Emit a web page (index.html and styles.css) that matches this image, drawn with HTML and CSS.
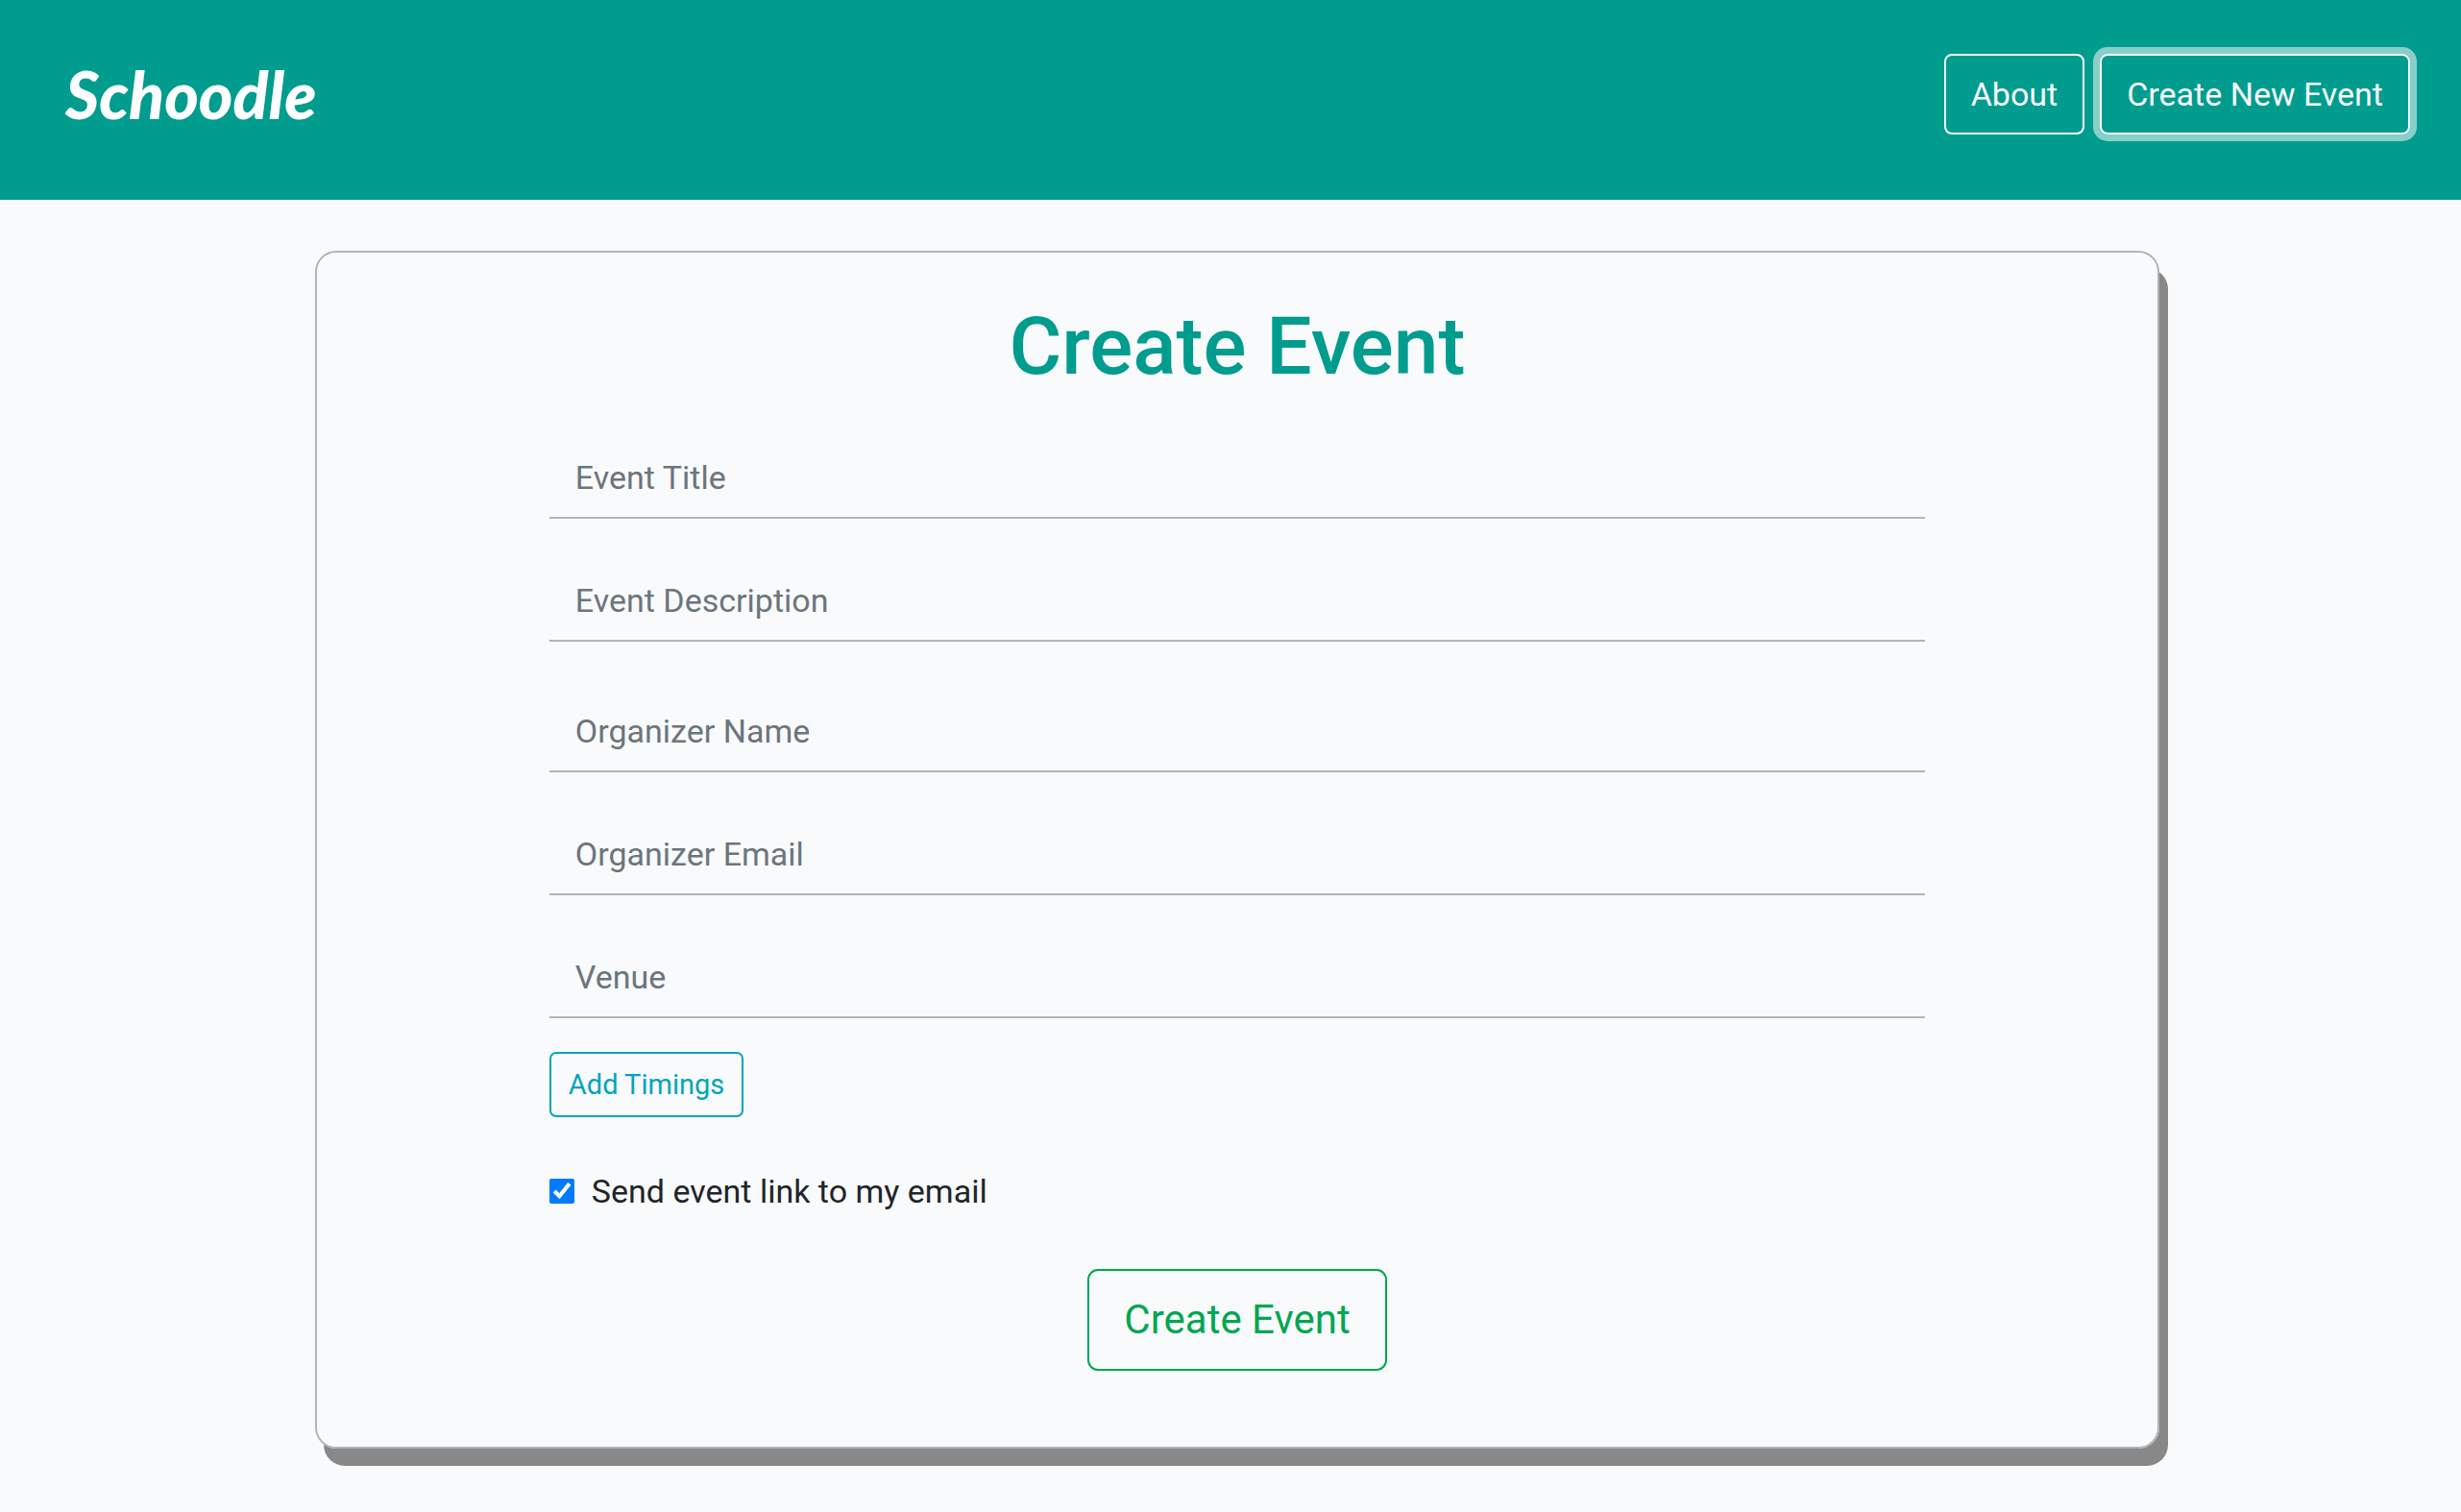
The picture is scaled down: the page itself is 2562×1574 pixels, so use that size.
FILE: index.html
```html
<!DOCTYPE html>
<html lang="en">
<head>
  <meta charset="utf-8">
  <meta name="viewport" content="width=device-width, initial-scale=1">
  <title>Schoodle</title>
  <link rel="stylesheet" href="styles.css">
</head>
<body>
  <header class="site-header">
    <a class="brand" href="#">Schoodle</a>
    <nav class="nav">
      <button class="btn btn-light" type="button">About</button>
      <button class="btn btn-light is-focused" type="button">Create New Event</button>
    </nav>
  </header>
  <main class="page">
    <section class="card">
      <h1 class="card-title">Create Event</h1>
      <form class="event-form">
        <div class="fields">
          <input class="field" type="text" placeholder="Event Title" aria-label="Event Title">
          <input class="field" type="text" placeholder="Event Description" aria-label="Event Description">
        </div>
        <div class="fields">
          <input class="field" type="text" placeholder="Organizer Name" aria-label="Organizer Name">
          <input class="field" type="email" placeholder="Organizer Email" aria-label="Organizer Email">
          <input class="field" type="text" placeholder="Venue" aria-label="Venue">
        </div>
        <button class="btn btn-info" type="button">Add Timings</button>
        <div class="check">
          <input class="check-box" type="checkbox" id="send-link" checked>
          <label for="send-link">Send event link to my email</label>
        </div>
        <button class="btn btn-success" type="submit">Create Event</button>
      </form>
    </section>
  </main>
</body>
</html>
```
FILE: styles.css
```css
* {
  box-sizing: border-box;
}

body {
  margin: 0;
  background: #f8fafc;
  color: #212529;
  font-family: Roboto, "Noto Sans", sans-serif;
  font-size: 34px;
  line-height: 52px;
}

.site-header {
  display: flex;
  justify-content: space-between;
  align-items: flex-start;
  padding: 56px 53px 68px 68px;
  background: #009c8e;
}

.brand {
  color: #fff;
  font-family: Lato, sans-serif;
  font-size: 68px;
  font-style: italic;
  font-weight: 900;
  line-height: 84px;
  text-decoration: none;
}

.nav {
  display: flex;
  gap: 16px;
}

.btn {
  border: 2px solid;
  border-radius: 8px;
  background: transparent;
  font: inherit;
  cursor: pointer;
}

.btn-light {
  padding: 14px 26px;
  color: #f8fafc;
}

.btn-light.is-focused {
  box-shadow: 0 0 0 7px rgba(248, 250, 252, 0.55);
}

.page {
  padding: 53px 12.25% 66px 12.8%;
}

.card {
  padding: 50px 12.6% 79px;
  border: 2px solid #adb5bd;
  border-radius: 22px;
  box-shadow: 9px 18px 0 #888;
}

.card-title {
  margin: 0;
  color: #009c8e;
  font-size: 84px;
  font-weight: 500;
  line-height: 96px;
  text-align: center;
}

.event-form {
  display: flex;
  flex-direction: column;
  align-items: flex-start;
}

.fields {
  display: flex;
  flex-direction: column;
  gap: 44px;
  width: 100%;
  padding-top: 47px;
}

.fields + .fields {
  padding-top: 52px;
}

.field {
  width: 100%;
  height: 84px;
  padding: 0 27px;
  border: 0;
  border-bottom: 2px solid #adb5bd;
  border-radius: 0;
  background: transparent;
  color: #212529;
  font: inherit;
}

.field::placeholder {
  color: #6c757d;
  opacity: 1;
}

.btn-info {
  margin-top: 35px;
  padding: 10px 18px;
  border-radius: 7px;
  color: #00a5bb;
  font-size: 29px;
  line-height: 44px;
}

.check {
  display: flex;
  align-items: center;
  gap: 18px;
  margin-top: 51px;
}

.check-box {
  width: 26px;
  height: 26px;
  margin: 0;
  accent-color: #007bff;
}

.btn-success {
  align-self: center;
  margin-top: 55px;
  padding: 19px 36px;
  border-radius: 11px;
  color: #00a651;
  font-size: 42px;
  line-height: 64px;
}
```
